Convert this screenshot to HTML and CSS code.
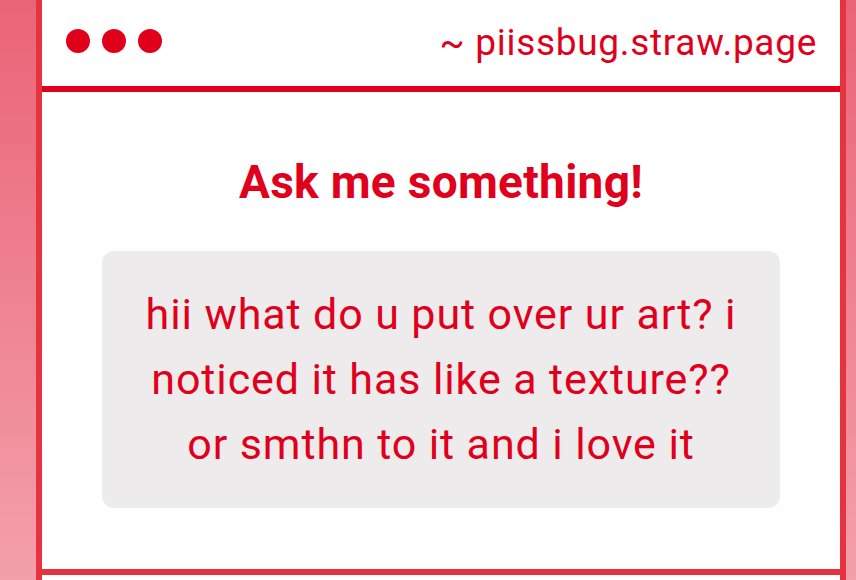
FILE: index.html
```html
<!DOCTYPE html>
<html>
<head>
<meta charset="utf-8">
<link rel="stylesheet" href="styles.css">
</head>
<body>
<div class="window">
  <header class="titlebar">
    <div class="dots"><span class="dot"></span><span class="dot"></span><span class="dot"></span></div>
    <div class="url">~ piissbug.straw.page</div>
  </header>
  <main class="content">
    <h1 class="title">Ask me something!</h1>
    <div class="question">hii what do u put over ur art? i noticed it has like a texture?? or smthn to it and i love it</div>
  </main>
  <div class="footer"></div>
</div>
</body>
</html>
```
FILE: styles.css
```css
html, body {
  margin: 0;
  padding: 0;
  height: 100%;
  overflow: hidden;
}
body {
  background: linear-gradient(to bottom, #ea6477 0%, #f3a0ab 100%);
  font-family: Roboto, "Liberation Sans", sans-serif;
  color: #e0001b;
}
.window {
  margin-left: 36px;
  width: 798px;
  height: 100%;
  background: #fff;
  border-left: 6px solid #e5333f;
  border-right: 6px solid #e5333f;
  display: flex;
  flex-direction: column;
}
.titlebar {
  height: 82px;
  padding: 0 24px 4px 24px;
  display: flex;
  align-items: center;
  justify-content: space-between;
  border-bottom: 6px solid #e0001b;
}
.dots {
  display: flex;
  gap: 12px;
}
.dot {
  width: 24px;
  height: 24px;
  border-radius: 50%;
  background: #e0001b;
}
.url {
  font-size: 37px;
  line-height: 1;
  letter-spacing: 0.7px;
  margin-top: 3px;
  margin-right: -1px;
}
.content {
  height: 477px;
  padding: 0 60px;
  display: flex;
  flex-direction: column;
  align-items: center;
  border-bottom: 6px solid #e5333f;
}
.title {
  margin: 62px 0 0 0;
  font-size: 46px;
  font-weight: 700;
  line-height: 56px;
  letter-spacing: 0.3px;
}
.question {
  margin-top: 41px;
  box-sizing: border-box;
  width: 678px;
  height: 257px;
  background: #edebec;
  border-radius: 12px;
  padding: 31px 36px;
  font-size: 43px;
  line-height: 65px;
  letter-spacing: 0.9px;
  text-align: center;
}
.footer {
  flex: 1;
}
```
